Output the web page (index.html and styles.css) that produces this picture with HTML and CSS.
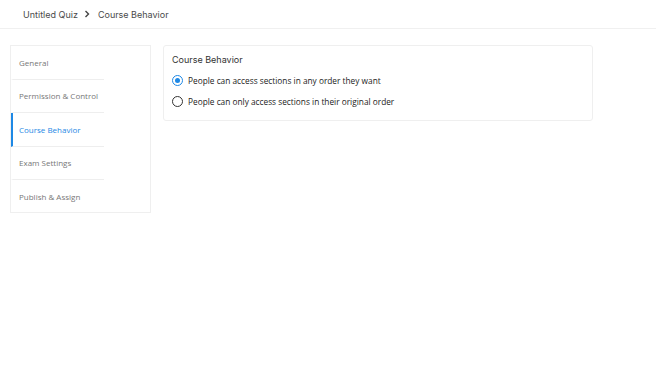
FILE: index.html
```html
<!DOCTYPE html>
<html>
<head>
<meta charset="utf-8">
<link rel="stylesheet" href="styles.css">
</head>
<body>
<header class="topbar">
  <span class="crumb">Untitled Quiz</span>
  <svg class="chev" width="6" height="8" viewBox="0 0 6 8"><path d="M1.5 1 L4.5 4 L1.5 7" fill="none" stroke="#444" stroke-width="1.4"/></svg>
  <span class="crumb">Course Behavior</span>
</header>
<main class="content">
  <nav class="sidebar">
    <div class="item">General</div>
    <div class="item">Permission &amp; Control</div>
    <div class="item active">Course Behavior</div>
    <div class="item">Exam Settings</div>
    <div class="item last">Publish &amp; Assign</div>
  </nav>
  <section class="card">
    <h2 class="title">Course Behavior</h2>
    <label class="option"><span class="radio checked"></span>People can access sections in any order they want</label>
    <label class="option"><span class="radio"></span>People can only access sections in their original order</label>
  </section>
</main>
</body>
</html>
```
FILE: styles.css
```css
* { box-sizing: border-box; }
html, body { margin: 0; padding: 0; background: #fff; }
body { width: 656px; height: 377px; overflow: hidden; font-family: "Open Sans", sans-serif; }
.topbar {
  height: 29px;
  border-bottom: 1px solid #f0f0f0;
  display: flex;
  align-items: center;
  padding-left: 23px;
  gap: 5px;
}
.crumb { font-family: "Inter", sans-serif; font-size: 9px; color: #4a4a4a; }
.chev { margin: 0 3px 0 1px; }
.content {
  display: flex;
  align-items: flex-start;
  padding: 16px 0 0 10px;
  gap: 12px;
}
.sidebar {
  width: 141px;
  height: 168px;
  border: 1px solid #efefef;
  display: flex;
  flex-direction: column;
}
.item {
  width: 93px;
  height: 33.5px;
  flex: none;
  display: flex;
  align-items: center;
  padding-left: 6px;
  font-size: 8px;
  color: #777;
  border-bottom: 1px solid #eeeeee;
  border-left: 2px solid transparent;
}
.item.last { border-bottom: none; }
.item.active { color: #1e88e5; border-left-color: #1e88e5; }
.card {
  width: 430px;
  height: 76px;
  border: 1px solid #efefef;
  border-radius: 3px;
  padding: 7px 8px 0 8px;
}
.title {
  margin: 0 0 4px 0;
  font-family: "Inter", sans-serif;
  font-weight: 400;
  font-size: 9px;
  line-height: 13px;
  color: #333;
}
.option {
  display: flex;
  align-items: center;
  gap: 5px;
  height: 21px;
  font-size: 8.3px;
  color: #222;
}
.radio {
  width: 11px;
  height: 11px;
  border: 1.3px solid #333;
  border-radius: 50%;
  flex: none;
  position: relative;
}
.radio.checked { border-color: #1e88e5; }
.radio.checked::after {
  content: "";
  position: absolute;
  left: 1.5px; top: 1.5px;
  width: 5.4px; height: 5.4px;
  border-radius: 50%;
  background: #1e88e5;
}
```
